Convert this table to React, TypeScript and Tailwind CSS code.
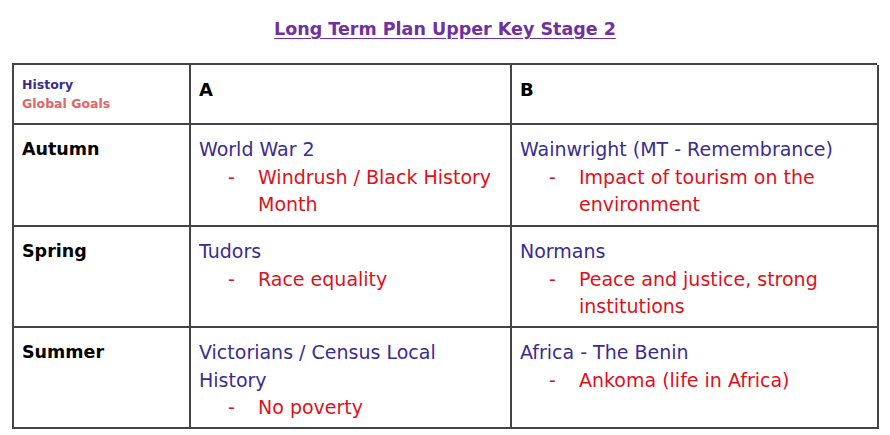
const FONT = "font-['DejaVu_Sans',sans-serif]";
const BLUE = "text-[#3b2c8f]";
const RED = "text-[#e0101a]";

type Entry = { topic: string[]; goal: string[] };

const rows: { term: string; a: Entry; b: Entry }[] = [
  {
    term: "Autumn",
    a: { topic: ["World War 2"], goal: ["Windrush / Black History", "Month"] },
    b: { topic: ["Wainwright (MT - Remembrance)"], goal: ["Impact of tourism on the", "environment"] },
  },
  {
    term: "Spring",
    a: { topic: ["Tudors"], goal: ["Race equality"] },
    b: { topic: ["Normans"], goal: ["Peace and justice, strong", "institutions"] },
  },
  {
    term: "Summer",
    a: { topic: ["Victorians / Census Local", "History"], goal: ["No poverty"] },
    b: { topic: ["Africa - The Benin"], goal: ["Ankoma (life in Africa)"] },
  },
];

export default function App() {
  return (
    <div className={`h-[435px] w-[890px] overflow-hidden bg-white ${FONT}`}>
      <h1 className="pt-[16px] text-center text-[17.5px] font-bold text-[#7030a0] underline underline-offset-[3px]">
        Long Term Plan Upper Key Stage 2
      </h1>
      <div className="ml-[12px] mt-[21px] grid w-[865px] grid-cols-[177px_321px_367px] grid-rows-[60px_102px_101px_101px] border-l-2 border-t-2 border-[#444]">
        <Cell>
          <div className="pt-[2px] text-[12.5px] font-bold leading-[19px]">
            <div className="text-[#3b2c8f]">History</div>
            <div className="text-[#e06666]">Global Goals</div>
          </div>
        </Cell>
        <Cell>
          <Head>A</Head>
        </Cell>
        <Cell>
          <Head>B</Head>
        </Cell>
        {rows.map((r) => (
          <Row key={r.term} term={r.term} a={r.a} b={r.b} />
        ))}
      </div>
    </div>
  );
}

function Cell({ children }: { children?: React.ReactNode }) {
  return <div className="border-b-2 border-r-2 border-[#444] px-[8px] pt-[8px]">{children}</div>;
}

function Head({ children }: { children: React.ReactNode }) {
  return <div className="pt-[3px] text-[18px] font-bold leading-[27px] text-black">{children}</div>;
}

function Row({ term, a, b }: { term: string; a: Entry; b: Entry }) {
  return (
    <>
      <Cell>
        <div className="pt-[3px] text-[17.5px] font-bold leading-[27px] text-black">{term}</div>
      </Cell>
      <Cell>
        <Block e={a} />
      </Cell>
      <Cell>
        <Block e={b} />
      </Cell>
    </>
  );
}

function Block({ e }: { e: Entry }) {
  return (
    <div className="pt-[3px] text-[19px] leading-[27.5px]">
      {e.topic.map((t) => (
        <div key={t} className={`whitespace-nowrap ${BLUE}`}>{t}</div>
      ))}
      <div className={`flex ${RED}`}>
        <span className="w-[59px] pl-[29px]">-</span>
        <div>
          {e.goal.map((g) => (
            <div key={g} className="whitespace-nowrap">{g}</div>
          ))}
        </div>
      </div>
    </div>
  );
}
